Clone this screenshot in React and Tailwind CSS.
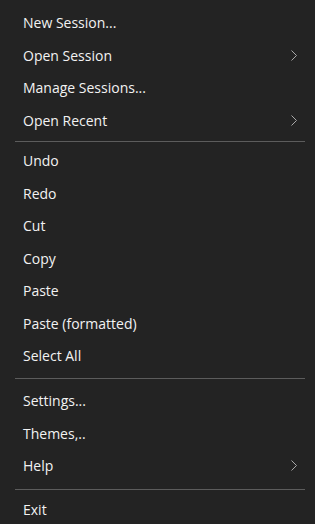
import React from 'react';

const groups = [
    [
        { label: 'New Session...' },
        { label: 'Open Session', sub: true },
        { label: 'Manage Sessions...' },
        { label: 'Open Recent', sub: true },
    ],
    [
        { label: 'Undo' },
        { label: 'Redo' },
        { label: 'Cut' },
        { label: 'Copy' },
        { label: 'Paste' },
        { label: 'Paste (formatted)' },
        { label: 'Select All' },
    ],
    [
        { label: 'Settings...' },
        { label: 'Themes,..' },
        { label: 'Help', sub: true },
    ],
    [{ label: 'Exit' }],
];

// separator spacing above/below each divider
const separatorClasses = [
    '',
    'mt-[5px] mb-[2px]',
    'mt-[6.5px] mb-[5.25px]',
    'mt-[7.25px] mb-[2.75px]',
];

const Chevron = () => (
    <svg width="6" height="11" viewBox="0 0 6 11" fill="none" className="text-[#a8a8a8]">
        <path d="M0.5 0.5L5.5 5.5L0.5 10.5" stroke="currentColor" strokeWidth="1" />
    </svg>
);

const MenuItem = ({ item }) => (
    <div className="h-[32.5px] flex items-center justify-between pl-[23px] pr-[18px] text-[14px] text-[#f2f2f2] hover:bg-[#2f2f2f] cursor-default">
        <span>{item.label}</span>
        {item.sub && <Chevron />}
    </div>
);

export default function App() {
    return (
        <div
            className="w-[315px] h-[524px] bg-[#232323] pt-[6.25px] overflow-hidden"
            style={{ fontFamily: '"Open Sans", "Noto Sans", sans-serif' }}
        >
            {groups.map((group, gi) => (
                <div key={gi}>
                    {gi > 0 && <div className={`h-px bg-[#5c5c5c] ml-[15px] mr-[10px] ${separatorClasses[gi]}`} />}
                    {group.map((item) => (
                        <MenuItem key={item.label} item={item} />
                    ))}
                </div>
            ))}
        </div>
    );
}
